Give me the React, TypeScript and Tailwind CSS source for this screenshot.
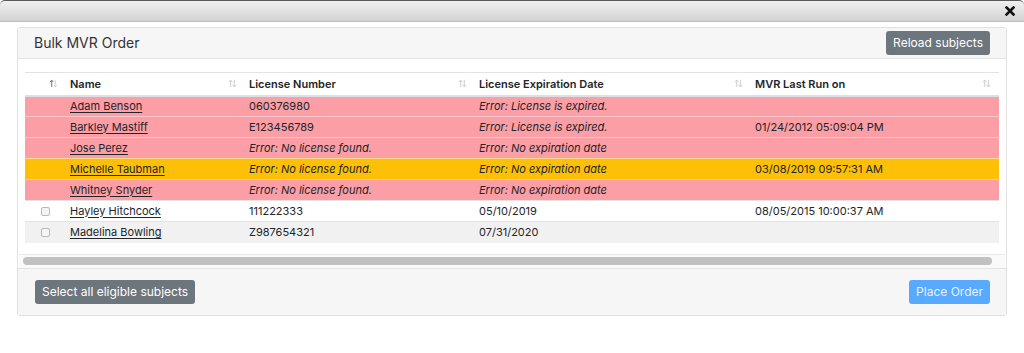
import React from "react";

type Row = {
  name: string;
  license: string;
  licenseError?: boolean;
  expiration: string;
  expirationError?: boolean;
  lastRun: string;
  tone: "danger" | "warning" | "white" | "stripe";
};

const rows: Row[] = [
  { name: "Adam Benson", license: "060376980", expiration: "Error: License is expired.", expirationError: true, lastRun: "", tone: "danger" },
  { name: "Barkley Mastiff", license: "E123456789", expiration: "Error: License is expired.", expirationError: true, lastRun: "01/24/2012 05:09:04 PM", tone: "danger" },
  { name: "Jose Perez", license: "Error: No license found.", licenseError: true, expiration: "Error: No expiration date", expirationError: true, lastRun: "", tone: "danger" },
  { name: "Michelle Taubman", license: "Error: No license found.", licenseError: true, expiration: "Error: No expiration date", expirationError: true, lastRun: "03/08/2019 09:57:31 AM", tone: "warning" },
  { name: "Whitney Snyder", license: "Error: No license found.", licenseError: true, expiration: "Error: No expiration date", expirationError: true, lastRun: "", tone: "danger" },
  { name: "Hayley Hitchcock", license: "111222333", expiration: "05/10/2019", lastRun: "08/05/2015 10:00:37 AM", tone: "white" },
  { name: "Madelina Bowling", license: "Z987654321", expiration: "07/31/2020", lastRun: "", tone: "stripe" },
];

const toneClass = {
  danger: "bg-[#fb9ea5] border-[#fcc6ca]",
  warning: "bg-[#fec006] border-[#fbd98a]",
  white: "bg-white border-[#e3e3e3]",
  stripe: "bg-[#f1f1f1] border-[#e3e3e3]",
};

function SortIcon() {
  return (
    <svg width="9" height="9" viewBox="0 0 10 10" className="shrink-0">
      <path d="M3 9V1.5M1 3.5L3 1.2L5 3.5" stroke="#c8c8c8" strokeWidth="1" fill="none" />
      <path d="M7 1v7.5M5 6.5L7 8.8L9 6.5" stroke="#c8c8c8" strokeWidth="1" fill="none" />
    </svg>
  );
}

function SortIconUp() {
  return (
    <svg width="9" height="9" viewBox="0 0 10 10" className="shrink-0">
      <path d="M3 9V1.5M1 3.5L3 1.2L5 3.5" stroke="#6b6b6b" strokeWidth="1" fill="none" />
      <path d="M7 1v7.5M5 6.5L7 8.8L9 6.5" stroke="#d0d0d0" strokeWidth="1" fill="none" />
    </svg>
  );
}

function HeaderCell({ label, width, first, last }: { label: string; width: string; first?: boolean; last?: boolean }) {
  return (
    <th className={`${width} p-0 text-left font-semibold`}>
      <div className={`flex items-center justify-between pl-2 ${last ? "pr-[8px]" : "pr-[4px]"}`}>
        <span>{label}</span>
        {first ? <SortIconUp /> : <SortIcon />}
      </div>
    </th>
  );
}

export default function App() {
  return (
    <div className="w-[1024px] h-[353px] bg-white overflow-hidden font-['Inter',sans-serif] text-[#212529]">
      {/* window title bar */}
      <div className="h-[22px] rounded-t-[5px] border-t border-[#5a5a5a] border-b border-b-[#bdbdbd] bg-gradient-to-b from-[#f1f1f1] to-[#d2d2d2] flex items-center justify-end pr-[9px]">
        <svg width="10" height="10" viewBox="0 0 10 10">
          <path d="M1.5 1.5L8.5 8.5M8.5 1.5L1.5 8.5" stroke="#111" strokeWidth="2.6" strokeLinecap="square" />
        </svg>
      </div>

      <div className="ml-[17px] mt-[5px] w-[990px] border border-[#e1e1e1] rounded-[3px]">
        {/* card header */}
        <div className="h-[31px] bg-[#f6f6f6] border-b border-[#e3e3e3] flex items-center justify-between pl-4 pr-4">
          <span className="text-[14px] text-[#333] -mt-[1px]">Bulk MVR Order</span>
          <button className="h-[24px] px-[7px] rounded-[3px] bg-[#6d757d] text-white text-[12px]">Reload subjects</button>
        </div>

        {/* card body */}
        <div className="bg-white pt-[13px] px-[7px]">
          <table className="w-[974px] border-collapse text-[11px] table-fixed">
            <thead>
              <tr className="h-[23px] border-t border-[#e3e3e3] border-b-2 border-b-[#dcdfe3]">
                <HeaderCell label="" width="w-[37px]" first />
                <HeaderCell label="Name" width="w-[179px]" />
                <HeaderCell label="License Number" width="w-[230px]" />
                <HeaderCell label="License Expiration Date" width="w-[276px]" />
                <HeaderCell label="MVR Last Run on" width="w-[252px]" last />
              </tr>
            </thead>
            <tbody>
              {rows.map((r, i) => (
                <tr key={r.name} className={`h-[21px] ${i > 0 ? "border-t" : ""} ${toneClass[r.tone]}`}>
                  <td className="p-0 pl-[16px]">
                    {(r.tone === "white" || r.tone === "stripe") && (
                      <div className="w-[9px] h-[9px] border border-[#b9b9b9] rounded-[2px] bg-[#f5f5f5]" />
                    )}
                  </td>
                  <td className="p-0 pl-2">
                    <span className="underline underline-offset-2">{r.name}</span>
                  </td>
                  <td className={`p-0 pl-2 ${r.licenseError ? "italic" : ""}`}>{r.license}</td>
                  <td className={`p-0 pl-2 ${r.expirationError ? "italic" : ""}`}>{r.expiration}</td>
                  <td className="p-0 pl-2">{r.lastRun}</td>
                </tr>
              ))}
            </tbody>
          </table>

          {/* horizontal scrollbar */}
          <div className="mt-[11px] -mx-[6px] border-t border-[#e8e8e8] bg-[#fafafa] h-[14px] flex items-center pl-[4px]">
            <div className="w-[969px] h-[8px] rounded-full bg-[#c1c1c1]" />
          </div>
        </div>

        {/* card footer */}
        <div className="h-[47px] bg-[#f6f6f6] border-t border-[#e3e3e3] flex items-center justify-between pl-[17px] pr-4">
          <button className="h-[24px] px-[7px] rounded-[3px] bg-[#6d757d] text-white text-[12px]">Select all eligible subjects</button>
          <button className="h-[24px] px-[7px] rounded-[3px] bg-[#57aaff] text-[#e8f3ff] text-[12px]">Place Order</button>
        </div>
      </div>
    </div>
  );
}
